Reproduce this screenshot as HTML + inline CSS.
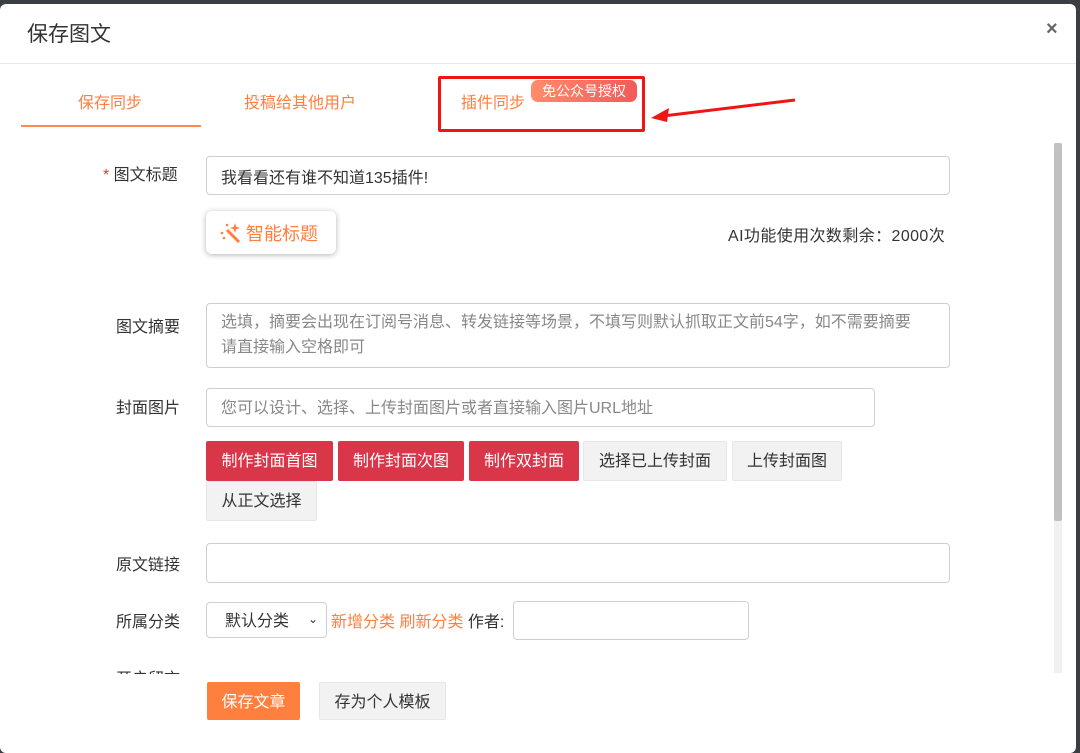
<!DOCTYPE html>
<html><head><meta charset="utf-8"><style>
*{box-sizing:border-box;margin:0;padding:0}
body{width:1080px;height:753px;background:#3a3d44;font-family:"Liberation Sans","Noto Sans CJK SC",sans-serif;position:relative;overflow:hidden;color:#333}
.modal{position:absolute;left:0;top:4px;width:1076px;height:749px;background:#fff;border-radius:6px}
.abs{position:absolute}
.lbl{position:absolute;font-size:16px;color:#333}
.inp{position:absolute;border:1px solid #ccd0d6;border-radius:4px;background:#fff;font-size:16px;color:#333;padding-left:14px;display:flex;align-items:center}
.btn{position:absolute;height:40px;font-size:16px;display:flex;align-items:center;justify-content:center;border-radius:2px}
.red{background:#d9364a;color:#fff}
.gray{background:#f2f2f2;color:#333;border:1px solid #e6e6e6}
</style></head><body>
<div class="modal">
 <div class="abs" style="left:27px;top:14px;font-size:21px;color:#333">保存图文</div>
 <div class="abs" style="left:1046px;top:14px;font-size:20px;color:#666;font-weight:bold">×</div>
 <div class="abs" style="left:0;top:59px;width:1076px;height:1px;background:#e8e8e8"></div>
 <div class="abs" style="left:78px;top:85px;font-size:16px;color:#ff7f3f">保存同步</div>
 <div class="abs" style="left:21px;top:121px;width:180px;height:2px;background:#ff8a50"></div>
 <div class="abs" style="left:244px;top:85px;font-size:16px;color:#ff7f3f">投稿给其他用户</div>
 <div class="abs" style="left:461px;top:85px;font-size:16px;color:#ff7f3f">插件同步</div>
 <div class="abs" style="left:531px;top:76px;width:106px;height:22px;border-radius:7px;background:linear-gradient(90deg,#ff8c6a,#f25a5a);color:#fff;font-size:14px;text-align:center;line-height:22px">免公众号授权</div>
 <div class="abs" style="left:438px;top:72px;width:207px;height:56px;border:3px solid #f01515;border-radius:2px"></div>
 <svg class="abs" style="left:645px;top:92px" width="155" height="30"><path d="M150 4 L18 20" stroke="#f01515" stroke-width="3"/><path d="M6 22 L24 12 L22 26 Z" fill="#f01515"/></svg>

 <div class="lbl" style="left:103px;top:157px"><span style="color:#e33">*</span> 图文标题</div>
 <div class="inp" style="left:206px;top:152px;width:744px;height:39px">我看看还有谁不知道135插件!</div>
 <div class="abs" style="left:206px;top:207px;width:130px;height:43px;border-radius:6px;box-shadow:0 1px 6px rgba(0,0,0,.3);background:#fff;color:#ff7f3f;font-size:18px;display:flex;align-items:center;padding-left:13px">
  <svg width="24" height="22" viewBox="0 0 24 22" style="margin-right:3px"><path d="M8 8 L20 20" stroke="#ff7f3f" stroke-width="3"/><path d="M16 1 L17.2 4.8 L21 6 L17.2 7.2 L16 11 L14.8 7.2 L11 6 L14.8 4.8Z" fill="#ff7f3f"/><circle cx="3" cy="11" r="1.3" fill="#ff7f3f"/><circle cx="8" cy="3" r="1.3" fill="#ff7f3f"/><circle cx="5" cy="16" r="1.3" fill="#ff7f3f"/></svg>智能标题</div>
 <div class="abs" style="left:728px;top:218px;font-size:16px;color:#333;letter-spacing:0.4px">AI功能使用次数剩余：2000次</div>

 <div class="lbl" style="left:116px;top:309px">图文摘要</div>
 <div class="inp" style="left:206px;top:299px;width:744px;height:65px;align-items:flex-start;padding-top:6px;padding-right:24px;line-height:25px;color:#888">选填，摘要会出现在订阅号消息、转发链接等场景，不填写则默认抓取正文前54字，如不需要摘要请直接输入空格即可</div>

 <div class="lbl" style="left:116px;top:390px">封面图片</div>
 <div class="inp" style="left:206px;top:384px;width:669px;height:39px;color:#888;padding-bottom:4px">您可以设计、选择、上传封面图片或者直接输入图片URL地址</div>
 <div class="btn red" style="left:206px;top:437px;width:127px;padding-bottom:4px">制作封面首图</div>
 <div class="btn red" style="left:338px;top:437px;width:126px;padding-bottom:4px">制作封面次图</div>
 <div class="btn red" style="left:469px;top:437px;width:110px;padding-bottom:4px">制作双封面</div>
 <div class="btn gray" style="left:583px;top:437px;width:144px;padding-bottom:4px">选择已上传封面</div>
 <div class="btn gray" style="left:732px;top:437px;width:110px;padding-bottom:4px">上传封面图</div>
 <div class="btn gray" style="left:206px;top:477px;width:111px;padding-bottom:4px">从正文选择</div>

 <div class="lbl" style="left:116px;top:547px">原文链接</div>
 <div class="inp" style="left:206px;top:539px;width:744px;height:40px"></div>

 <div class="lbl" style="left:116px;top:604px">所属分类</div>
 <div class="inp" style="left:206px;top:598px;width:121px;height:36px;padding-left:18px;padding-bottom:3px">默认分类<span style="position:absolute;right:8px;font-size:12px">⌄</span></div>
 <div class="abs" style="left:331px;top:604px;font-size:16px;color:#ff7f3f">新增分类 刷新分类 <span style="color:#333">作者:</span></div>
 <div class="inp" style="left:513px;top:597px;width:236px;height:39px"></div>
 <div class="abs" style="left:116px;top:662px;width:830px;height:8px;overflow:hidden"><div style="font-size:16px;color:#333;margin-top:-1px">开启留言</div></div>

 <div class="btn" style="left:207px;top:678px;width:93px;height:38px;background:#ff7f3f;color:#fff;padding-bottom:3px">保存文章</div>
 <div class="btn gray" style="left:319px;top:678px;width:127px;height:38px;padding-bottom:3px">存为个人模板</div>

 <div class="abs" style="left:1054px;top:139px;width:8px;height:530px;background:#f1f1f1"></div>
 <div class="abs" style="left:1054px;top:139px;width:8px;height:378px;background:#c1c1c1;border-radius:2px"></div>
</div>
</body></html>
